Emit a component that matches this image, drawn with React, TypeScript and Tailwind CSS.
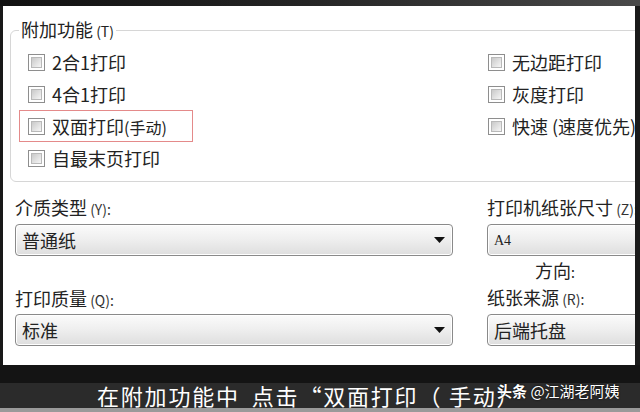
const cjk = { fontFamily: '"Noto Sans CJK SC", "Noto Sans", sans-serif' };

function Box() {
  return (
    <span className="flex h-[17px] w-[17px] shrink-0 border border-[#8e8e8e] bg-white p-[2px]">
      <span className="block h-full w-full border border-[#b9b9b9] bg-gradient-to-br from-[#c9c9c9] to-[#f6f6f6]" />
    </span>
  );
}

function Check({ label, boxed }: { label: React.ReactNode; boxed?: boolean }) {
  return (
    <div
      className={
        "flex h-[32px] w-[174px] items-center gap-[7px] pl-[8px] " +
        (boxed ? "border border-[#e48a8a]" : "border border-transparent")
      }
    >
      <Box />
      <span className="whitespace-nowrap text-[18px] leading-none text-[#222]">{label}</span>
    </div>
  );
}

function RightCheck({ label }: { label: React.ReactNode }) {
  return (
    <div className="flex h-[32px] items-center gap-[7px] border border-transparent">
      <Box />
      <span className="whitespace-nowrap text-[18px] leading-none text-[#222]">{label}</span>
    </div>
  );
}

function Select({ value, small, arrow }: { value: string; small?: boolean; arrow?: boolean }) {
  return (
    <div className="flex h-[32px] items-center justify-between rounded-[4px] border border-[#8a8a8a] bg-gradient-to-b from-[#fbfbfb] via-[#eeeeee] to-[#dedede] pl-[6px] pr-[7px] shadow-[inset_0_0_0_1px_#ffffff]">
      <span
        className={small ? "text-[14px] text-[#222]" : "text-[18px] text-[#222]"}
        style={small ? { fontFamily: '"Liberation Serif", serif' } : undefined}
      >
        {value}
      </span>
      {arrow && (
        <svg width="11" height="6" viewBox="0 0 11 6">
          <path d="M0 0h11L5.5 6z" fill="#111" />
        </svg>
      )}
    </div>
  );
}

function Label({ main, key2 }: { main: string; key2: string }) {
  return (
    <div className="h-[26px] whitespace-nowrap text-[18px] leading-[26px] text-[#222]">
      {main}
      <span className="text-[14px] text-[#333]">{key2}</span>
    </div>
  );
}

export default function App() {
  return (
    <div className="flex h-[412px] w-[640px] flex-col overflow-hidden bg-[#161616]" style={cjk}>
      <div className="h-[6px] bg-gradient-to-r from-[#111] via-[#262626] to-[#4a4a4a]" />
      <div className="flex h-[359px]">
        <div className="w-[3px] shrink-0 bg-[#181818]" />
        <div className="w-[632px] shrink-0 overflow-hidden bg-white">
          <fieldset className="ml-[7px] mt-[13px] h-[163px] w-[660px] rounded-tl-[6px] rounded-bl-[6px] border border-[#d6d6d6]">
            <legend className="ml-[8px] px-[2px] text-[18px] leading-[20px] text-[#222]">
              附加功能<span className="text-[14px]"> (T)</span>
            </legend>
            <div className="mt-[5px] flex">
              <div className="ml-[8px] w-[468px] shrink-0">
                <Check label="2合1打印" />
                <Check label="4合1打印" />
                <Check
                  boxed
                  label={
                    <>
                      双面打印<span className="text-[16px]">(手动)</span>
                    </>
                  }
                />
                <Check label="自最末页打印" />
              </div>
              <div className="shrink-0">
                <RightCheck label="无边距打印" />
                <RightCheck label="灰度打印" />
                <RightCheck label="快速 (速度优先)" />
              </div>
            </div>
          </fieldset>
          <div className="mt-[12px] flex">
            <div className="ml-[12px] w-[438px] shrink-0">
              <Label main="介质类型" key2=" (Y):" />
              <div className="mt-[4px]">
                <Select value="普通纸" arrow />
              </div>
              <div className="mt-[29px]">
                <Label main="打印质量" key2=" (Q):" />
              </div>
              <div className="mt-[3px]">
                <Select value="标准" arrow />
              </div>
            </div>
            <div className="ml-[34px] w-[200px] shrink-0">
              <Label main="打印机纸张尺寸" key2=" (Z):" />
              <div className="mt-[4px]">
                <Select value="A4" small />
              </div>
              <div className="h-[28px] pl-[48px] text-[18px] leading-[28px] text-[#222]">
                方向<span className="text-[14px]">:</span>
              </div>
              <Label main="纸张来源" key2=" (R):" />
              <div className="mt-[4px]">
                <Select value="后端托盘" />
              </div>
            </div>
          </div>
        </div>
        <div className="flex-1 bg-[#1a1a1a]" />
      </div>
      <div className="h-[18px] bg-[#141414]" />
      <div className="relative h-[25px] whitespace-nowrap bg-[#2b2b2b] pl-[97px] text-[22px] leading-[25px] tracking-[1.8px] text-white">
        在附加功能中<span className="inline-block w-[12px]" />点击“双面打印（ 手动）
        <div className="absolute left-[497px] top-[0px] whitespace-nowrap text-[15px] leading-[16px] tracking-normal text-white [text-shadow:0_0_2px_#000]">
          <span className="font-bold">头条</span> @江湖老阿姨
        </div>
      </div>
      <div className="flex-1 bg-[#9a9a9a]" />
    </div>
  );
}
